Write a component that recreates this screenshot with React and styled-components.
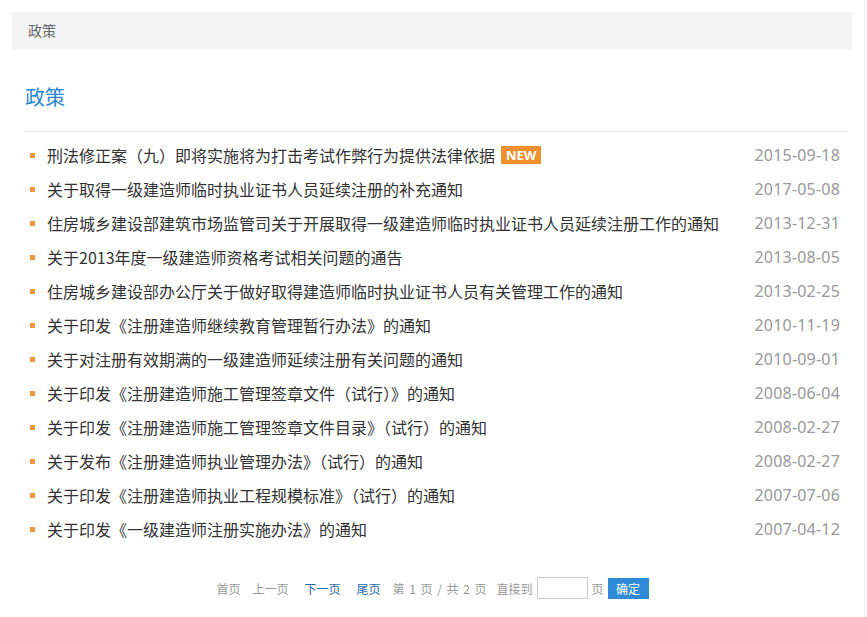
import styled, { createGlobalStyle } from "styled-components"

const GlobalStyle = createGlobalStyle`
    body{
        margin: 0;
        background: #ffffff;
        font-family: "Noto Sans CJK SC", "Noto Sans", sans-serif;
    }
`

const policies = [
    { title: "刑法修正案（九）即将实施将为打击考试作弊行为提供法律依据", date: "2015-09-18", isNew: true },
    { title: "关于取得一级建造师临时执业证书人员延续注册的补充通知", date: "2017-05-08" },
    { title: "住房城乡建设部建筑市场监管司关于开展取得一级建造师临时执业证书人员延续注册工作的通知", date: "2013-12-31" },
    { title: "关于2013年度一级建造师资格考试相关问题的通告", date: "2013-08-05" },
    { title: "住房城乡建设部办公厅关于做好取得建造师临时执业证书人员有关管理工作的通知", date: "2013-02-25" },
    { title: "关于印发《注册建造师继续教育管理暂行办法》的通知", date: "2010-11-19" },
    { title: "关于对注册有效期满的一级建造师延续注册有关问题的通知", date: "2010-09-01" },
    { title: "关于印发《注册建造师施工管理签章文件（试行）》的通知", date: "2008-06-04" },
    { title: "关于印发《注册建造师施工管理签章文件目录》（试行）的通知", date: "2008-02-27" },
    { title: "关于发布《注册建造师执业管理办法》（试行）的通知", date: "2008-02-27" },
    { title: "关于印发《注册建造师执业工程规模标准》（试行）的通知", date: "2007-07-06" },
    { title: "关于印发《一级建造师注册实施办法》的通知", date: "2007-04-12" },
]

export default function App() {
    return (
        <>
            <GlobalStyle />
            <Page>
                <Breadcrumb>政策</Breadcrumb>
                <Content>
                    <Heading>政策</Heading>
                    <List>
                        {policies.map((p, i) => (
                            <Row key={i}>
                                <Title>
                                    {p.title}
                                    {p.isNew && <NewBadge>NEW</NewBadge>}
                                </Title>
                                <DateText>{p.date}</DateText>
                            </Row>
                        ))}
                    </List>
                    <Pager>
                        <PageLink>首页</PageLink>
                        <PageLink $gap={12}>上一页</PageLink>
                        <PageLink $active $gap={16}>下一页</PageLink>
                        <PageLink $active $gap={16}>尾页</PageLink>
                        <PageLink $gap={12} $wide>第 1 页 / 共 2 页</PageLink>
                        <PageLink $gap={10}>直接到</PageLink>
                        <JumpInput type="text" />
                        <PageLink $gap={4}>页</PageLink>
                        <ConfirmButton>确定</ConfirmButton>
                    </Pager>
                </Content>
            </Page>
        </>
    )
}

const Page = styled.div`
    width: 839px;
    min-height: 593px;
    padding: 12px 13px 12px 12px;
    border-right: 1px solid #f0f0f0;
`

const Breadcrumb = styled.div`
    height: 37px;
    line-height: 37px;
    padding-left: 16px;
    margin-right: -1px;
    background: #f4f4f4;
    font-size: 14px;
    color: #666666;
`

const Content = styled.div`
    padding: 0 3px 0 13px;
`

const Heading = styled.h2`
    margin: 33px 0 0;
    padding-bottom: 19px;
    border-bottom: 1px solid #e6e6e6;
    font-size: 20px;
    line-height: 30px;
    font-weight: 400;
    color: #2b86d3;
`

const List = styled.ul`
    list-style: none;
    margin: 0;
    padding: 6px 0 0;
`

const Row = styled.li`
    display: flex;
    align-items: center;
    justify-content: space-between;
    height: 34px;
    padding: 0 8px 0 22px;
    position: relative;
    font-size: 16px;

    &::before{
        content: "";
        position: absolute;
        left: 5px;
        top: 15px;
        width: 5px;
        height: 5px;
        background: #f0973e;
    }
`

const Title = styled.span`
    display: flex;
    align-items: center;
    color: #333333;
    white-space: nowrap;
`

const NewBadge = styled.span`
    display: inline-block;
    margin-left: 6px;
    padding: 0 5px;
    height: 18px;
    line-height: 18px;
    background: #f0902c;
    color: #ffffff;
    font-family: "Open Sans", "Noto Sans", sans-serif;
    font-weight: 700;
    font-size: 13px;
`

const DateText = styled.span`
    color: #999999;
    font-family: "Noto Sans", sans-serif;
    font-size: 16px;
    letter-spacing: 0.2px;
`

const Pager = styled.div`
    display: flex;
    align-items: center;
    justify-content: center;
    margin-top: 31px;
    margin-left: -8px;
    font-size: 12px;
    height: 22px;
`

const PageLink = styled.span`
    margin-left: ${p => p.$gap ?? 0}px;
    color: ${p => p.$active ? "#2a6aa8" : "#999999"};
    word-spacing: ${p => p.$wide ? "2px" : "0"};
`

const JumpInput = styled.input`
    width: 51px;
    height: 22px;
    margin-left: 4px;
    box-sizing: border-box;
    border: 1px solid #cccccc;
    padding: 0;
    outline: none;
`

const ConfirmButton = styled.button`
    margin-left: 4px;
    width: 41px;
    height: 21px;
    border: none;
    background: #2f8ad8;
    color: #ffffff;
    font-family: "Noto Sans CJK SC", sans-serif;
    font-size: 12px;
    padding: 0;
`
